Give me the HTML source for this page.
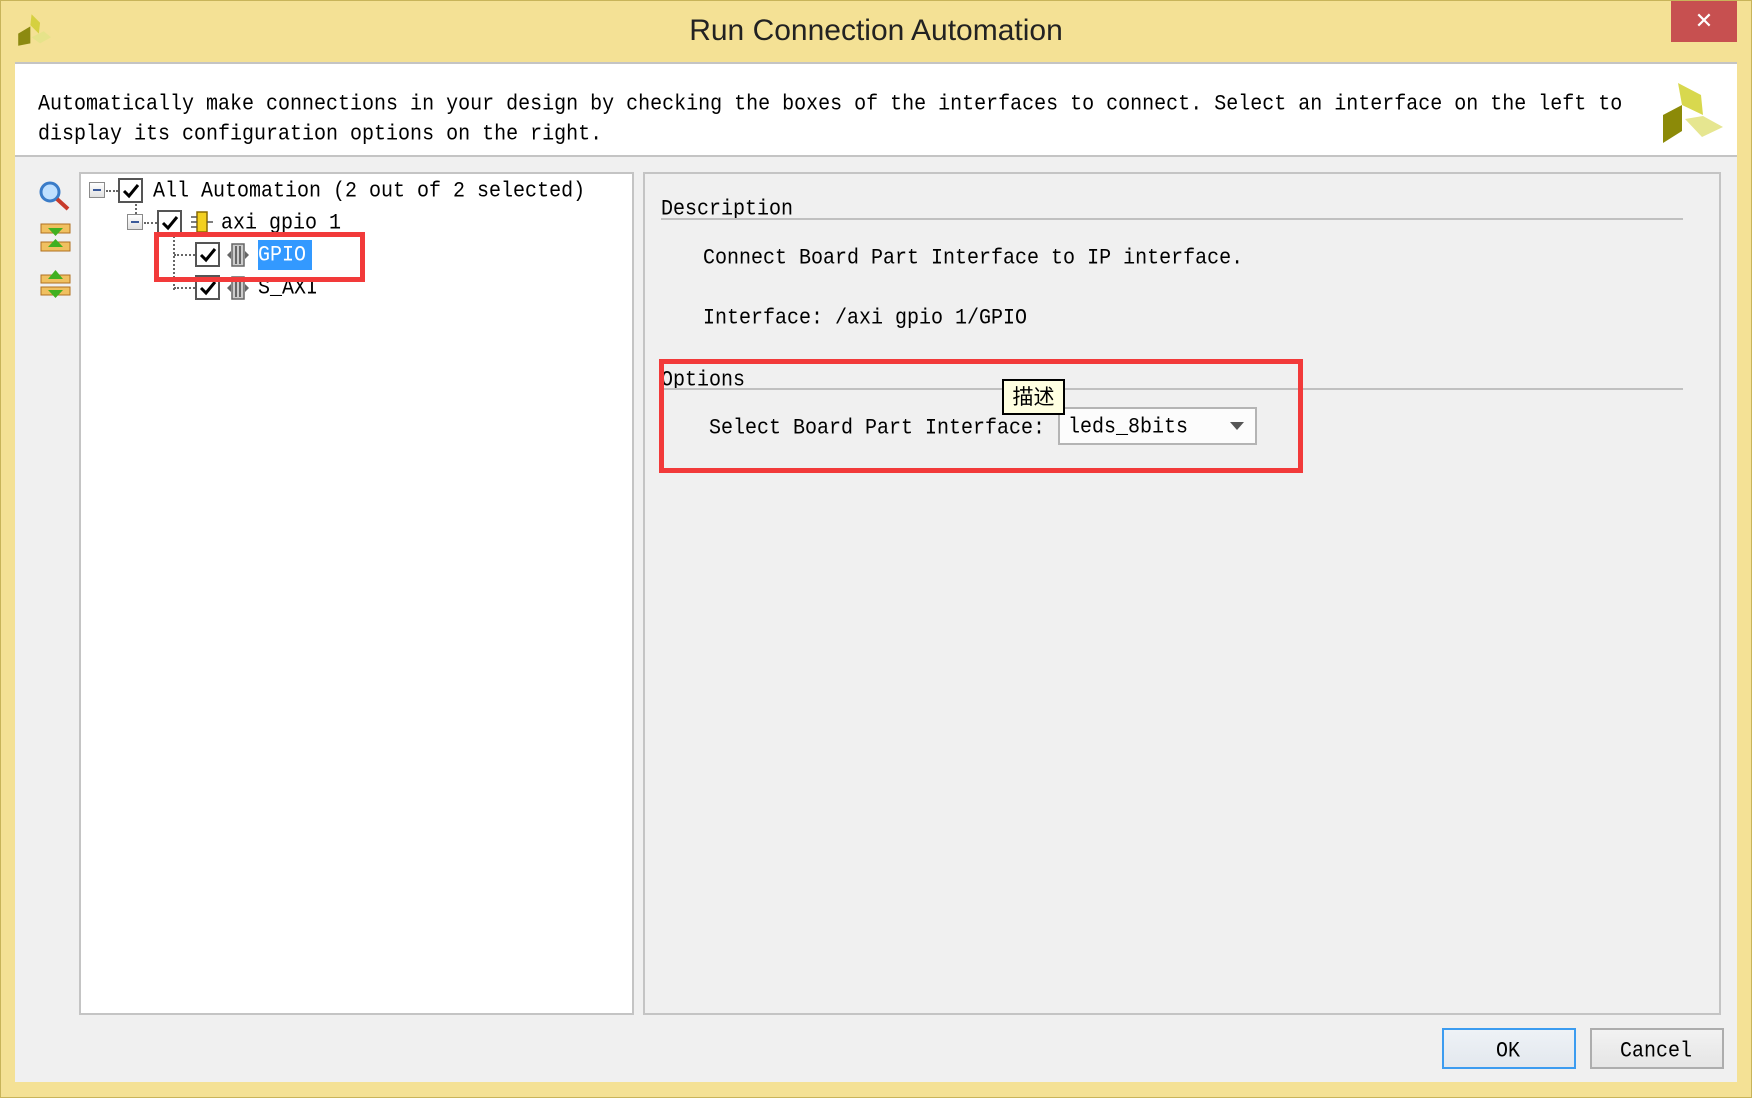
<!DOCTYPE html>
<html><head><meta charset="utf-8"><style>
*{margin:0;padding:0;box-sizing:border-box}
body{width:1752px;height:1098px;background:#f4e195;position:relative;overflow:hidden;font-family:"Liberation Mono","Noto Sans CJK SC",monospace;color:#000}
.a{position:absolute}
.t{position:absolute;font-size:20px;line-height:24px;white-space:pre;transform:scaleY(1.1);transform-origin:left center}
.cb{position:absolute;width:25px;height:25px;border:2px solid #555;background:#fff}
.cb svg{position:absolute;left:2px;top:2px}
.ex{position:absolute;width:16px;height:16px;border:1px solid #8a8a8a;background:linear-gradient(#fff,#e0e0e0)}
.ex:after{content:"";position:absolute;left:3px;top:6px;width:8px;height:2px;background:#3b5a9a}
.dv{position:absolute;border-left:2px dotted #666}
.dh{position:absolute;border-top:2px dotted #666}
</style></head><body>
<div class="a" style="left:0;top:0;width:1752px;height:1098px;border:1px solid #c8b45a"></div>
<!-- title logo -->
<svg class="a" style="left:16px;top:13px" width="36" height="34" viewBox="0 0 28 28"><polygon points="12,1 19,8 18,17 11,10" fill="#d5d040"/><polygon points="1,17 11,11 11,25 1,27" fill="#8c8a10"/><polygon points="12,20 22,15 28,20 19,25" fill="#e6e38a"/></svg>
<div class="a" style="left:0;top:14px;width:1752px;text-align:center;font-family:'Liberation Sans',sans-serif;font-size:30px;color:#222">Run Connection Automation</div>
<div class="a" style="left:1671px;top:1px;width:66px;height:41px;background:#c75050;color:#fff;font-family:'Liberation Sans',sans-serif;font-size:22px;text-align:center;line-height:40px">✕</div>
<!-- content -->
<div class="a" style="left:15px;top:62px;width:1722px;height:1020px;background:#f0f0f0"></div>
<div class="a" style="left:15px;top:62px;width:1722px;height:95px;background:#fff;border-top:2px solid #c4c4c4;border-bottom:2px solid #c4c4c4"></div>
<div class="t" style="left:38px;top:93px">Automatically make connections in your design by checking the boxes of the interfaces to connect. Select an interface on the left to</div>
<div class="t" style="left:38px;top:123px">display its configuration options on the right.</div>
<svg class="a" style="left:1663px;top:83px" width="62" height="62" viewBox="0 0 62 62"><polygon points="15,0 38,12 40,32 19,22" fill="#d8d84e"/><polygon points="0,32 19,22 19,48 0,60" fill="#8c8a08"/><polygon points="22,36 40,33 60,44 39,54" fill="#e6e690"/></svg>
<!-- toolbar icons -->
<svg class="a" style="left:38px;top:180px" width="34" height="32" viewBox="0 0 34 32"><circle cx="12" cy="12" r="9" fill="#bfe0ff" stroke="#3a7cc8" stroke-width="3"/><line x1="19" y1="19" x2="30" y2="29" stroke="#c83a2a" stroke-width="4"/></svg>
<svg class="a" style="left:40px;top:223px" width="32" height="30" viewBox="0 0 32 30"><rect x="1" y="1" width="29" height="9" fill="#f0c060" stroke="#b07020"/><rect x="1" y="19" width="29" height="9" fill="#f0c060" stroke="#b07020"/><polygon points="8,5 23,5 15.5,13" fill="#40b020"/><polygon points="8,24 23,24 15.5,16" fill="#40b020"/></svg>
<svg class="a" style="left:40px;top:269px" width="32" height="30" viewBox="0 0 32 30"><rect x="1" y="6" width="29" height="8" fill="#f0c060" stroke="#b07020"/><rect x="1" y="18" width="29" height="8" fill="#f0c060" stroke="#b07020"/><polygon points="8,10 23,10 15.5,1" fill="#40b020"/><polygon points="8,21 23,21 15.5,29" fill="#40b020"/></svg>
<!-- tree panel -->
<div class="a" style="left:79px;top:172px;width:555px;height:843px;background:#fff;border:2px solid #c4c4c4"></div>
<div class="ex" style="left:89px;top:182px"></div>
<div class="dh" style="left:106px;top:190px;width:12px"></div>
<div class="cb" style="left:118px;top:178px"><svg width="18" height="18" viewBox="0 0 18 18"><path d="M2 9 L7 14 L16 3" fill="none" stroke="#000" stroke-width="3"/></svg></div>
<div class="t" style="left:153px;top:180px">All Automation (2 out of 2 selected)</div>
<div class="dv" style="left:135px;top:204px;height:10px"></div>
<div class="ex" style="left:127px;top:214px"></div>
<div class="dh" style="left:144px;top:222px;width:13px"></div>
<div class="cb" style="left:157px;top:210px"><svg width="18" height="18" viewBox="0 0 18 18"><path d="M2 9 L7 14 L16 3" fill="none" stroke="#000" stroke-width="3"/></svg></div>
<svg class="a" style="left:190px;top:210px" width="24" height="26" viewBox="0 0 24 26"><rect x="7" y="2" width="10" height="20" fill="#f3d020" stroke="#8a6a00" stroke-width="1.5"/><path d="M1 7h6M1 12h6M1 17h6M17 12h6" stroke="#555" stroke-width="1.5"/></svg>
<div class="t" style="left:221px;top:212px">axi gpio 1</div>
<div class="dv" style="left:173px;top:236px;height:54px"></div>
<div class="dh" style="left:174px;top:254px;width:21px"></div>
<div class="dh" style="left:174px;top:287px;width:21px"></div>
<div class="cb" style="left:195px;top:242px"><svg width="18" height="18" viewBox="0 0 18 18"><path d="M2 9 L7 14 L16 3" fill="none" stroke="#000" stroke-width="3"/></svg></div>
<svg class="a" style="left:226px;top:242px" width="24" height="26" viewBox="0 0 24 26"><rect x="6" y="2" width="12" height="22" fill="#ccc" stroke="#666" stroke-width="1.5"/><path d="M10 4v18M14 4v18" stroke="#444" stroke-width="1.5"/><path d="M1 13 L5 9 V17Z M23 13 L19 9 V17Z" fill="#666"/></svg>
<div class="a" style="left:258px;top:240px;width:54px;height:30px;background:#3399ff"></div>
<div class="t" style="left:258px;top:244px;color:#fff">GPIO</div>
<div class="cb" style="left:195px;top:275px"><svg width="18" height="18" viewBox="0 0 18 18"><path d="M2 9 L7 14 L16 3" fill="none" stroke="#000" stroke-width="3"/></svg></div>
<svg class="a" style="left:226px;top:275px" width="24" height="26" viewBox="0 0 24 26"><rect x="6" y="2" width="12" height="22" fill="#ccc" stroke="#666" stroke-width="1.5"/><path d="M10 4v18M14 4v18" stroke="#444" stroke-width="1.5"/><path d="M1 13 L5 9 V17Z M23 13 L19 9 V17Z" fill="#666"/></svg>
<div class="t" style="left:258px;top:277px">S_AXI</div>
<div class="a" style="left:154px;top:232px;width:211px;height:50px;border:5px solid #f23a3a"></div>
<!-- right panel -->
<div class="a" style="left:643px;top:172px;width:1078px;height:843px;border:2px solid #c4c4c4"></div>
<div class="t" style="left:661px;top:198px">Description</div>
<div class="a" style="left:661px;top:218px;width:1022px;height:2px;background:#c0c0c0"></div>
<div class="t" style="left:703px;top:247px">Connect Board Part Interface to IP interface.</div>
<div class="t" style="left:703px;top:307px">Interface: /axi gpio 1/GPIO</div>
<div class="t" style="left:661px;top:369px">Options</div>
<div class="a" style="left:661px;top:388px;width:1022px;height:2px;background:#c0c0c0"></div>
<div class="t" style="left:709px;top:417px">Select Board Part Interface:</div>
<div class="a" style="left:1058px;top:407px;width:199px;height:38px;background:#fcfcfc;border:2px solid #b4b4b4"></div>
<div class="t" style="left:1068px;top:416px">leds_8bits</div>
<div class="a" style="left:1230px;top:422px;width:0;height:0;border-left:7px solid transparent;border-right:7px solid transparent;border-top:8px solid #555"></div>
<div class="a" style="left:1002px;top:379px;width:63px;height:36px;background:#ffffe1;border:2px solid #000;font-family:'Noto Sans CJK SC',sans-serif;font-size:21px;line-height:31px;text-align:center">描述</div>
<div class="a" style="left:659px;top:359px;width:644px;height:114px;border:5px solid #f23a3a"></div>
<!-- buttons -->
<div class="a" style="left:1442px;top:1028px;width:134px;height:41px;border:2px solid #3c9cf0;background:linear-gradient(#eef2f6,#e3e8ee)"></div>
<div class="t" style="left:1496px;top:1040px">OK</div>
<div class="a" style="left:1590px;top:1028px;width:134px;height:41px;border:2px solid #adadad;background:linear-gradient(#f2f2f2,#e5e5e5)"></div>
<div class="t" style="left:1620px;top:1040px">Cancel</div>
</body></html>
